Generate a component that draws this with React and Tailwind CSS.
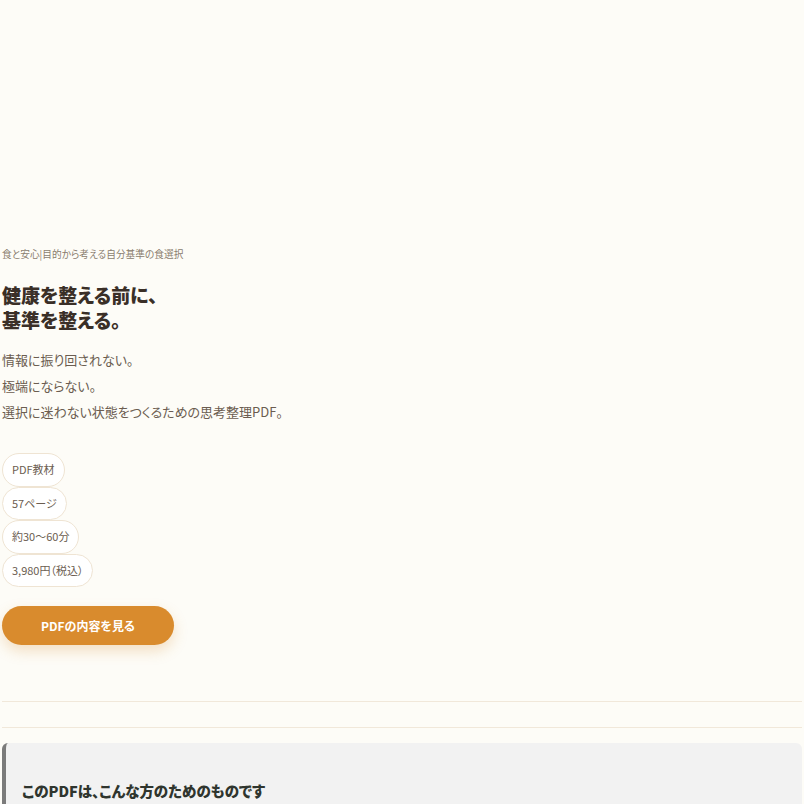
import React from "react"

const tags = ["PDF教材", "57ページ", "約30〜60分", "3,980円（税込）"]

const App = () => {
  return (
    <div
      className="min-h-screen bg-[#fdfcf7] px-[2px] text-[#3b3129] [font-feature-settings:'palt']"
      style={{ fontFamily: '"Noto Sans CJK JP", "Noto Sans", sans-serif' }}
    >
      {/* hero */}
      <section className="pt-[246px] pb-[56px]">
        <p className="text-[9.7px] leading-[16px] text-[#8a7c6e]">食と安心|目的から考える自分基準の食選択</p>
        <h1 className="mt-[20px] text-[19px] font-black leading-[25px] text-[#3a2f27]">
          健康を整える前に、
          <br />
          基準を整える。
        </h1>
        <div className="mt-[19px] flex flex-col gap-[8px] text-[13px] leading-[18px] text-[#6b5d50]">
          <p>情報に振り回されない。</p>
          <p>極端にならない。</p>
          <p>選択に迷わない状態をつくるための思考整理PDF。</p>
        </div>
        <ul className="mt-[32px] flex flex-col items-start">
          {tags.map((t) => (
            <li
              key={t}
              className="rounded-full border border-[#efe4d3] bg-white px-[9px] py-[6px] text-[11px] leading-[19.5px] text-[#6b5d50]"
            >
              {t}
            </li>
          ))}
        </ul>
        <button className="mt-[19px] h-[39px] w-[172px] rounded-full bg-[#d98b2d] text-[12px] font-bold text-white shadow-[0_6px_14px_rgba(217,139,45,0.25)]">
          PDFの内容を見る
        </button>
      </section>

      <div className="border-t border-[#f1e8da]" />
      <div className="h-[25px]" />
      <div className="border-t border-[#f1e8da]" />

      <section className="mt-[15px] rounded-[6px] border-l-4 border-[#7b7b7b] bg-[#f2f2f2] px-[16px] pt-[38px] pb-[24px]">
        <h2 className="text-[14.5px] font-black leading-[20px] text-[#2f352e]">このPDFは、こんな方のためのものです</h2>
      </section>
    </div>
  )
}

export default App
